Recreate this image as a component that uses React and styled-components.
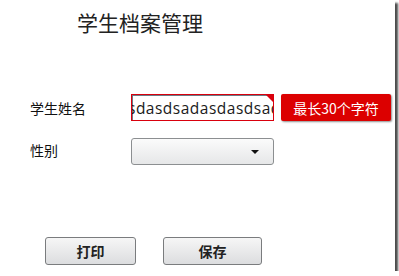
import React from 'react';
import styled, { createGlobalStyle } from 'styled-components';

const GlobalStyle = createGlobalStyle`
  html, body { margin: 0; padding: 0; background: #fff; }
  body { font-family: "Noto Sans CJK SC", "Noto Sans", sans-serif; }
`;

const Frame = styled.div`
  width: 395px;
  height: 271px;
  background: #fff;
  box-shadow: 3px 3px 2px rgba(0, 0, 0, 0.7);
  display: flex;
  flex-direction: column;
  box-sizing: border-box;
  padding-top: 10px;
`;

const Title = styled.h1`
  margin: 0 0 0 77px;
  font-size: 21px;
  line-height: 24px;
  font-weight: 400;
  color: #222;
`;

const Form = styled.div`
  display: flex;
  flex-direction: column;
  gap: 17px;
  margin-top: 60px;
  padding-left: 30px;
`;

const Row = styled.div`
  display: flex;
  align-items: ${p => (p.$top ? 'flex-start' : 'center')};
  height: 27px;
`;

const Label = styled.div`
  width: 92px;
  margin-right: 9px;
  flex-shrink: 0;
  font-size: 14px;
  line-height: 18px;
  color: #111;
  padding-top: ${p => p.$offset || 0}px;
`;

const InputBox = styled.div`
  position: relative;
  width: 143px;
  height: 27px;
  flex-shrink: 0;
  box-sizing: border-box;
  border: 1px solid #d9000d;
  box-shadow: inset 1px 1px 0 #6a7a86;
  display: flex;
  align-items: center;
  overflow: hidden;
  background: #fff;
`;

const InputText = styled.span`
  white-space: nowrap;
  font-family: "Open Sans", "Noto Sans", sans-serif;
  font-size: 15.5px;
  color: #1a1a1a;
  margin-left: -4px;
  letter-spacing: 0.5px;
`;

const Corner = styled.span`
  position: absolute;
  top: 0;
  right: 0;
  width: 0;
  height: 0;
  border-top: 7px solid #d9000d;
  border-left: 7px solid transparent;
`;

const Tip = styled.div`
  margin-left: 7px;
  width: 110px;
  height: 27px;
  border-radius: 2px;
  background: #dc0000;
  color: #fff;
  font-size: 14px;
  display: flex;
  align-items: center;
  justify-content: center;
  box-shadow: 1px 1px 2px rgba(0, 0, 0, 0.45);
`;

const Select = styled.div`
  width: 143px;
  height: 27px;
  box-sizing: border-box;
  border: 1px solid #8c8f91;
  border-radius: 3px;
  background: linear-gradient(#fbfbfb, #e6e7e8);
  display: flex;
  align-items: center;
  justify-content: flex-end;
  padding-right: 14px;
`;

const Arrow = styled.span`
  width: 0;
  height: 0;
  border-left: 4px solid transparent;
  border-right: 4px solid transparent;
  border-top: 4px solid #111;
`;

const Buttons = styled.div`
  display: flex;
  gap: 27px;
  padding-left: 45px;
  margin-top: 72px;
`;

const Button = styled.button`
  width: ${p => p.$w}px;
  height: 28px;
  box-sizing: border-box;
  border: 1px solid #7a7c7e;
  border-radius: 3px;
  background: linear-gradient(#f6f6f6, #dcdddf);
  font-family: "Noto Sans CJK SC", sans-serif;
  font-size: 14px;
  font-weight: 700;
  color: #222;
  padding: 0;
`;

export default function App() {
  return (
    <>
      <GlobalStyle />
      <Frame>
        <Title>学生档案管理</Title>
        <Form>
          <Row>
            <Label>学生姓名</Label>
            <InputBox>
              <InputText>sdasdsadasdasdsad</InputText>
              <Corner />
            </InputBox>
            <Tip>最长30个字符</Tip>
          </Row>
          <Row $top>
            <Label $offset={3}>性别</Label>
            <Select>
              <Arrow />
            </Select>
          </Row>
        </Form>
        <Buttons>
          <Button $w={91}>打印</Button>
          <Button $w={99}>保存</Button>
        </Buttons>
      </Frame>
    </>
  );
}
